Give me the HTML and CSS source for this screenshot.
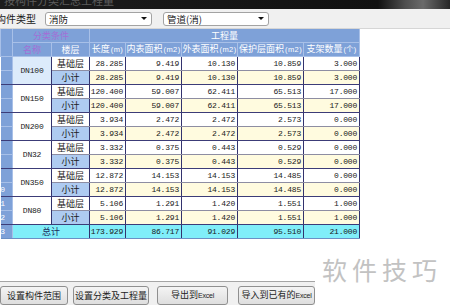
FILE: index.html
```html
<!DOCTYPE html>
<html lang="zh-CN">
<head>
  <meta charset="UTF-8">
  <title>分类汇总工程量</title>
  <link rel="stylesheet" href="styles.css">
</head>
<body>

  <!-- 窗口标题栏 -->
  <div class="titlebar"><span class="title">按构件分类汇总工程量</span></div>

  <!-- 构件类型选择 -->
  <div class="toolbar">
    <span class="tool-label">构件类型</span>
    <div class="combo combo-type"><span>消防</span><span class="arrow"></span></div>
    <div class="combo combo-sub"><span>管道(消)</span><span class="arrow"></span></div>
  </div>

  <!-- 汇总表 -->
  <table class="grid">
    <colgroup>
      <col style="width:12px"><col style="width:39px"><col style="width:38px">
      <col style="width:36px"><col style="width:56px"><col style="width:56px">
      <col style="width:66px"><col style="width:56px">
    </colgroup>
    <thead>
      <tr>
        <th class="no-head" rowspan="2"></th>
        <th class="cat" colspan="2">分类条件</th>
        <th colspan="5">工程量</th>
      </tr>
      <tr>
        <th class="cat">名称</th>
        <th>楼层</th>
        <th>长度<span class="unit">(m)</span></th>
        <th>内表面积<span class="unit">(m2)</span></th>
        <th>外表面积<span class="unit">(m2)</span></th>
        <th>保护层面积<span class="unit">(m2)</span></th>
        <th>支架数量<span class="unit">(个)</span></th>
      </tr>
    </thead>
    <tbody id="rows"></tbody>
  </table>

  <!-- 底部按钮 -->
  <div class="bottom-bar">
    <button class="btn btn-range">设置构件范围</button>
    <button class="btn btn-class">设置分类及工程量</button>
    <button class="btn btn-export">导出到<span class="excel">Excel</span></button>
    <button class="btn btn-import">导入到已有的<span class="excel">Excel</span></button>
  </div>

  <div class="watermark">软件技巧</div>

  <script>
    // 各规格管道：长度、内表面积、外表面积、保护层面积、支架数量
    const groups = [
      ["DN100", ["28.285", "9.419", "10.130", "10.859", "3.000"]],
      ["DN150", ["120.400", "59.007", "62.411", "65.513", "17.000"]],
      ["DN200", ["3.934", "2.472", "2.472", "2.573", "0.000"]],
      ["DN32", ["3.332", "0.375", "0.443", "0.529", "0.000"]],
      ["DN350", ["12.872", "14.153", "14.153", "14.485", "0.000"]],
      ["DN80", ["5.106", "1.291", "1.420", "1.551", "1.000"]]
    ];
    const total = ["173.929", "86.717", "91.029", "95.510", "21.000"];

    const body = document.getElementById("rows");
    let no = 1;

    groups.forEach(([name, vals], i) => {
      ["基础层", "小计"].forEach((floor, j) => {
        const tr = document.createElement("tr");
        tr.className = j === 0 ? "base" : "sub";
        let html = `<td class="no">${no++}</td>`;
        if (j === 0) html += `<td class="name${i === 0 ? " sel" : ""}" rowspan="2">${name}</td>`;
        html += `<td class="floor">${floor}</td>`;
        vals.forEach(v => html += `<td class="num">${v}</td>`);
        tr.innerHTML = html;
        body.appendChild(tr);
      });
    });

    // 总计行
    const totalRow = document.createElement("tr");
    totalRow.className = "total";
    let html = `<td class="no">${no}</td><td class="total-label" colspan="2">总计</td>`;
    total.forEach(v => html += `<td class="num">${v}</td>`);
    totalRow.innerHTML = html;
    body.appendChild(totalRow);
  </script>

</body>
</html>
```

FILE: styles.css
```css
* {
  box-sizing: border-box;
}
body {
  margin: 0;
  width: 450px;
  height: 305px;
  overflow: hidden;
  position: relative;
  display: flex;
  flex-direction: column;
  background: #fff;
  font-family: "Noto Sans CJK SC", sans-serif;
  color: #1a1a1a;
}
.titlebar {
  height: 9px;
  flex: none;
  overflow: hidden;
  background: linear-gradient(to right, #1d1d1d 0, #111 84%, #4e4e4e 90%, #6a6a6a 94%, #262626 100%);
}
.title {
  display: block;
  margin: -7px 0 0 4px;
  font-size: 11px;
  line-height: 14px;
  color: #5c5c5c;
}
.toolbar {
  height: 20px;
  flex: none;
  display: flex;
  align-items: center;
  background: #f0f0f0;
  border-bottom: 1px solid #d6d6d6;
}
.tool-label {
  margin-left: -4px;
  margin-right: 9px;
  font-size: 10px;
  line-height: 12px;
  white-space: nowrap;
}
.combo {
  height: 14px;
  display: flex;
  align-items: center;
  justify-content: space-between;
  padding-left: 3px;
  background: #fff;
  border: 1px solid #a3a3a3;
  border-radius: 3px;
  font-size: 9.5px;
  line-height: 12px;
}
.combo-type {
  width: 107px;
}
.combo-sub {
  width: 106px;
  margin-left: 11px;
}
.arrow {
  width: 0;
  height: 0;
  margin-right: 4px;
  border-left: 3px solid transparent;
  border-right: 3px solid transparent;
  border-top: 3px solid #111;
}

/* 汇总表 */
.grid {
  flex: none;
  align-self: flex-start;
  width: 359px;
  table-layout: fixed;
  border-collapse: collapse;
}
.grid th {
  height: 13.5px;
  padding: 0;
  background: #7ea1d8;
  color: #fff;
  font-weight: normal;
  font-size: 9px;
  line-height: 12px;
  white-space: nowrap;
  overflow: hidden;
  border: 1px solid #a8c0e8;
  border-top: none;
}
.grid th.cat {
  color: #a36fd6;
}
.grid .unit {
  font-family: "Liberation Sans", sans-serif;
  font-size: 7.5px;
  letter-spacing: 0.4px;
  margin-left: 1px;
}
.grid td {
  height: 14px;
  padding: 0;
  white-space: nowrap;
  overflow: hidden;
  line-height: 12px;
  border-right: 1px solid #33336e;
  border-bottom: 1px solid #8d8da2;
}
.grid tr.sub td,
.grid td.name {
  border-bottom-color: #3c3c78;
}
.grid td.no {
  background: #7ea1d8;
  color: #fff;
  font-family: "Liberation Mono", monospace;
  font-size: 8px;
  text-indent: -5px;
  border-right-color: #a8c0e8;
  border-bottom-color: #a8c0e8;
}
.grid td.name {
  text-align: center;
  font-family: "Liberation Mono", monospace;
  font-size: 8px;
  letter-spacing: -0.2px;
  background: #fff;
}
.grid td.name.sel {
  background: #dcebfb;
}
.grid td.floor {
  text-align: center;
  font-size: 9px;
  background: #fff;
}
.grid tr.sub td.floor {
  background: #aecbf1;
}
.grid td.num {
  text-align: right;
  padding-right: 2px;
  font-family: "Liberation Mono", monospace;
  font-size: 8px;
  letter-spacing: -0.2px;
  background: #fff;
}
.grid tr.sub td.num {
  background: #fffbdf;
}
.grid tr.total td {
  background: #80eef9;
  border-bottom-color: #6b8fc4;
}
.grid tr.total td.no {
  background: #7ea1d8;
}
.grid td.total-label {
  text-align: center;
  font-size: 9px;
  color: #1c2b5a;
}

/* 底部按钮 */
.bottom-bar {
  margin-top: auto;
  height: 24px;
  flex: none;
  display: flex;
  align-items: flex-start;
  padding-top: 4px;
  background: #f0f0f0;
  border-top: 1px solid #a4a4a4;
}
.btn {
  height: 19px;
  padding: 0;
  font-family: "Noto Sans CJK SC", sans-serif;
  font-size: 9px;
  line-height: 12px;
  color: #222;
  background: linear-gradient(#f4f4f4, #dedede);
  border: 1px solid #8f8f8f;
  border-radius: 3px;
  white-space: nowrap;
}
.btn-range {
  width: 68px;
}
.btn-class {
  width: 76px;
  margin-left: 5px;
}
.btn-export {
  width: 71px;
  margin-left: 8px;
}
.btn-import {
  width: 77px;
  margin-left: 10px;
}
.excel {
  font-family: "Liberation Sans", sans-serif;
  font-size: 7px;
  letter-spacing: -0.2px;
}
.watermark {
  position: absolute;
  left: 315px;
  top: 246px;
  width: 135px;
  height: 59px;
  padding: 2px 0 0 7px;
  background: #fff;
  color: #c2c2c2;
  font-size: 25px;
  letter-spacing: 5px;
  line-height: 42px;
}
```
